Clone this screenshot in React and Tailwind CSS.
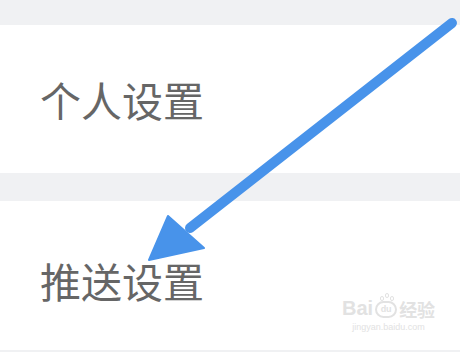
export default function App() {
    const rows = [
        { label: "个人设置", h: "h-[148px]", pt: "pt-0" },
        { label: "推送设置", h: "h-[149px]", pt: "pt-[10px]" },
    ];

    return (
        <div className="relative w-[460px] h-[352px] overflow-hidden bg-[#f0f1f3] font-['Noto_Sans_CJK_SC','Noto_Sans',sans-serif]">
            <div className="h-[25px]" />
            <div className={`${rows[0].h} bg-white flex items-center px-[40px]`}>
                <span className="text-[41px] leading-none text-[#666666]">{rows[0].label}</span>
            </div>
            <div className="h-[28px]" />
            <div className={`${rows[1].h} bg-white flex items-center px-[40px] pt-[10px]`}>
                <span className="text-[41px] leading-none text-[#666666]">{rows[1].label}</span>
            </div>

            {/* annotation arrow */}
            <svg className="absolute inset-0 pointer-events-none" width="460" height="352" viewBox="0 0 460 352">
                <line x1="452" y1="23" x2="190" y2="228" stroke="#4893ea" strokeWidth="10" strokeLinecap="round" />
                <polygon points="149,260 168,216 204,248" fill="#4893ea" stroke="#4893ea" strokeWidth="2" strokeLinejoin="round" />
            </svg>

            {/* watermark */}
            <div className="absolute left-[342px] top-[298px] flex flex-col items-center text-[#e2e2e2] pointer-events-none">
                <div className="flex items-end font-['Liberation_Sans',sans-serif] font-bold">
                    <span className="text-[20px] leading-none">Bai</span>
                    <span className="relative mx-[2px] w-[22px] h-[17px] rounded-full border-2 border-[#e2e2e2] text-[9px] leading-[13px] text-center">
                        du
                        <span className="absolute left-[3px] -top-[7px] w-[4px] h-[5px] rounded-full border border-[#e2e2e2]" />
                        <span className="absolute left-[8px] -top-[10px] w-[4px] h-[5px] rounded-full border border-[#e2e2e2]" />
                        <span className="absolute left-[13px] -top-[7px] w-[4px] h-[5px] rounded-full border border-[#e2e2e2]" />
                    </span>
                    <span className="text-[18px] leading-none font-['Noto_Sans_CJK_SC',sans-serif]">经验</span>
                </div>
                <span className="mt-[5px] text-[9px] leading-none font-['Liberation_Sans',sans-serif]">jingyan.baidu.com</span>
            </div>
        </div>
    );
}
